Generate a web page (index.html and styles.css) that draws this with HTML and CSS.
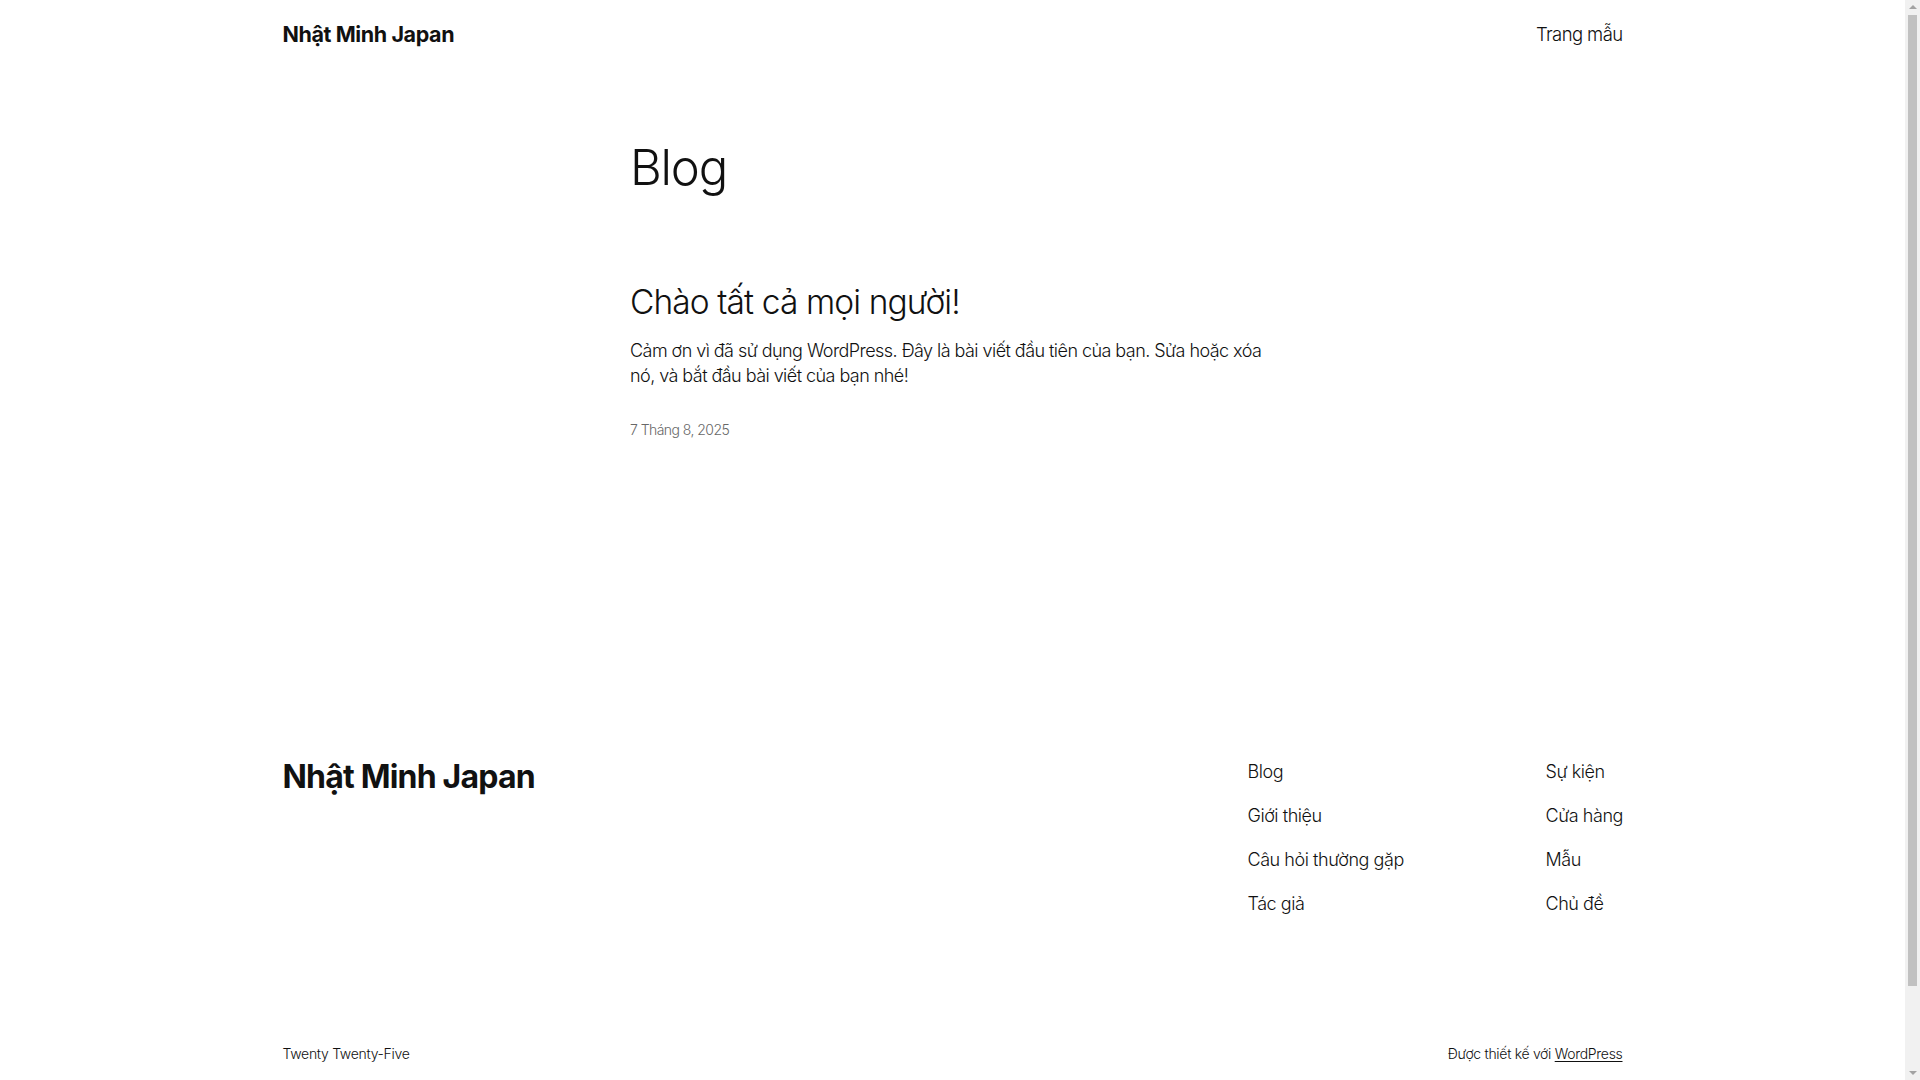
FILE: index.html
```html
<!DOCTYPE html>
<html lang="vi">
<head>
<meta charset="utf-8">
<title>Blog – Nhật Minh Japan</title>
<link rel="stylesheet" href="styles.css">
</head>
<body>
<div class="page">
<header class="site-header">
  <a class="site-title" href="#">Nhật Minh Japan</a>
  <nav class="header-nav"><a href="#">Trang mẫu</a></nav>
</header>
<main class="site-main">
  <h1 class="page-title">Blog</h1>
  <article class="post">
    <h2 class="post-title"><a href="#">Chào tất cả mọi người!</a></h2>
    <p class="post-excerpt">Cảm ơn vì đã sử dụng WordPress. Đây là bài viết đầu tiên của bạn. Sửa hoặc xóa nó, và bắt đầu bài viết của bạn nhé!</p>
    <time class="post-date">7 Tháng 8, 2025</time>
  </article>
</main>
<footer class="site-footer">
  <div class="footer-top">
    <a class="footer-title" href="#">Nhật Minh Japan</a>
    <div class="footer-navs">
      <ul class="footer-col col-a">
        <li><a href="#">Blog</a></li>
        <li><a href="#">Giới thiệu</a></li>
        <li><a href="#">Câu hỏi thường gặp</a></li>
        <li><a href="#">Tác giả</a></li>
      </ul>
      <ul class="footer-col col-b">
        <li><a href="#">Sự kiện</a></li>
        <li><a href="#">Cửa hàng</a></li>
        <li><a href="#">Mẫu</a></li>
        <li><a href="#">Chủ đề</a></li>
      </ul>
    </div>
  </div>
  <div class="footer-bottom">
    <span>Twenty Twenty-Five</span>
    <span>Được thiết kế với <a class="wp-link" href="#">WordPress</a></span>
  </div>
</footer>
</div>
<div class="scrollbar" aria-hidden="true">
  <span class="sb-arrow sb-up"></span>
  <span class="sb-thumb"></span>
  <span class="sb-arrow sb-down"></span>
</div>
</body>
</html>
```

FILE: styles.css
```css
html, body {
  margin: 0;
  padding: 0;
  background: #ffffff;
}
body {
  font-family: "Inter", "Noto Sans", "Liberation Sans", sans-serif;
  color: #111111;
  font-weight: 300;
  -webkit-font-smoothing: antialiased;
  overflow: hidden;
}
a {
  color: inherit;
  text-decoration: none;
}
.page {
  width: 1905px;
}
.site-header {
  max-width: 1340px;
  margin: 0 auto;
  height: 68px;
  display: flex;
  align-items: center;
  justify-content: space-between;
}
.site-title {
  font-size: 21.5px;
  font-weight: 700;
  letter-spacing: -0.4px;
}
.header-nav {
  font-size: 18.5px;
  font-weight: 300;
  letter-spacing: -0.6px;
}
.site-main {
  width: 645px;
  margin: 0 auto;
  padding-top: 71px;
}
.page-title {
  margin: 0;
  font-size: 49px;
  font-weight: 300;
  line-height: 1.2;
  letter-spacing: -1.2px;
}
.post {
  padding-top: 84px;
}
.post-title {
  margin: 0;
  font-size: 33.5px;
  font-weight: 300;
  line-height: 1.2;
  letter-spacing: -0.9px;
}
.post-excerpt {
  margin: 16px 0 0;
  font-size: 18px;
  line-height: 1.4;
  letter-spacing: -0.55px;
}
.post-date {
  display: block;
  margin-top: 32px;
  font-size: 14px;
  line-height: 1.4;
  color: #686868;
  letter-spacing: -0.55px;
}
.site-footer {
  max-width: 1340px;
  margin: 0 auto;
  padding-top: 318px;
  padding-bottom: 16px;
}
.footer-top {
  display: flex;
  justify-content: space-between;
  align-items: flex-start;
}
.footer-title {
  font-size: 32px;
  font-weight: 700;
  line-height: 1.2;
  letter-spacing: -0.8px;
}
.footer-navs {
  display: grid;
  grid-template-columns: 298px 77px;
  padding-top: 1px;
}
.footer-col {
  list-style: none;
  margin: 0;
  padding: 0;
  display: flex;
  flex-direction: column;
  gap: 18.8px;
  font-size: 18px;
  line-height: 1.4;
  letter-spacing: -0.45px;
  white-space: nowrap;
}
.footer-bottom {
  margin-top: 128px;
  display: flex;
  justify-content: space-between;
  align-items: center;
  font-size: 14px;
  line-height: 1.4;
  letter-spacing: -0.3px;
}
.wp-link {
  text-decoration: underline;
  text-underline-offset: 2px;
}
.scrollbar {
  position: fixed;
  top: 0;
  right: 0;
  width: 15px;
  height: 100vh;
  background: #f1f1f1;
  display: flex;
  flex-direction: column;
  align-items: center;
}
.sb-arrow {
  width: 0;
  height: 0;
  border-left: 4px solid transparent;
  border-right: 4px solid transparent;
  margin: 5px 0;
}
.sb-up {
  border-bottom: 4px solid #a3a3a3;
}
.sb-down {
  border-top: 4px solid #a3a3a3;
}
.sb-thumb {
  flex: 1;
  width: 9px;
  margin: 1px 0 80px;
  background: #c1c1c1;
}
```
